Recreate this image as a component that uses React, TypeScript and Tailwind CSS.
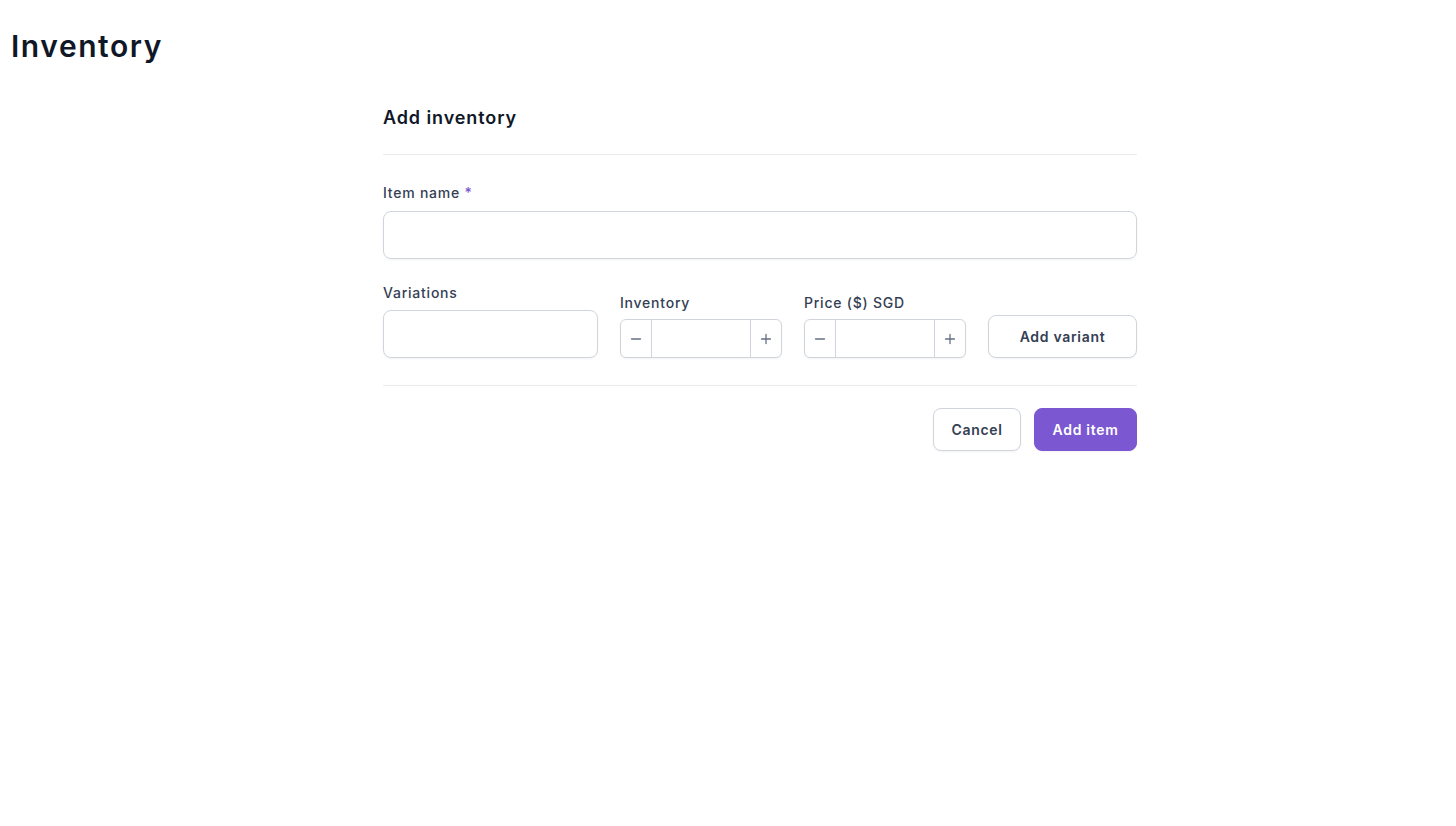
import React from "react";

function Stepper() {
  return (
    <div className="flex h-[39px] w-[162px] overflow-hidden rounded-md border border-[#d0d5dd] bg-white shadow-[0_1px_2px_rgba(16,24,40,0.05)]">
      <button className="flex w-[31px] shrink-0 items-center justify-center border-r border-[#d0d5dd] text-[#667085]">
        <svg width="12" height="12" viewBox="0 0 12 12" fill="none" stroke="currentColor" strokeWidth="1.3" strokeLinecap="round">
          <path d="M1.5 6h9" />
        </svg>
      </button>
      <input className="min-w-0 flex-1 px-2 text-sm outline-none" />
      <button className="flex w-[31px] shrink-0 items-center justify-center border-l border-[#d0d5dd] text-[#667085]">
        <svg width="12" height="12" viewBox="0 0 12 12" fill="none" stroke="currentColor" strokeWidth="1.3" strokeLinecap="round">
          <path d="M1.5 6h9M6 1.5v9" />
        </svg>
      </button>
    </div>
  );
}

export default function App() {
  return (
    <div className="min-h-[826px] bg-white font-['Inter',sans-serif] text-[#101828]">
      <h1 className="px-[11px] pt-[28px] text-[30px] font-semibold leading-9 tracking-[0.052em]">Inventory</h1>
      <div className="ml-[383px] w-[754px]">
        <div className="mt-[40px] border-b border-[#eaecf0] pb-[22px]">
          <h2 className="text-lg font-semibold leading-7 tracking-[0.05em]">Add inventory</h2>
        </div>
        <div className="pt-7">
          <label className="block text-sm font-medium leading-5 tracking-[0.055em] text-[#344054]">
            Item name <span className="text-[#7b57d1]">*</span>
          </label>
          <input className="mt-2 block h-12 w-full rounded-lg border border-[#d0d5dd] px-3 shadow-[0_1px_2px_rgba(16,24,40,0.05)] outline-none" />
        </div>
        <div className="mt-6 flex items-end gap-[22px] border-b border-[#eaecf0] pb-[27px]">
          <div className="w-[215px] shrink-0">
            <label className="block text-sm font-medium leading-5 tracking-[0.055em] text-[#344054]">Variations</label>
            <input className="mt-[7px] block h-12 w-full rounded-lg border border-[#d0d5dd] px-3 shadow-[0_1px_2px_rgba(16,24,40,0.05)] outline-none" />
          </div>
          <div className="shrink-0">
            <label className="block text-sm font-medium leading-5 tracking-[0.055em] text-[#344054]">Inventory</label>
            <div className="mt-[6px]">
              <Stepper />
            </div>
          </div>
          <div className="shrink-0">
            <label className="block text-sm font-medium leading-5 tracking-[0.055em] text-[#344054]">Price ($) SGD</label>
            <div className="mt-[6px]">
              <Stepper />
            </div>
          </div>
          <button className="h-[43px] w-[149px] shrink-0 rounded-lg border border-[#d0d5dd] bg-white text-sm font-semibold tracking-[0.05em] text-[#344054] shadow-[0_1px_2px_rgba(16,24,40,0.05)]">
            Add variant
          </button>
        </div>
        <div className="flex justify-end gap-[13px] pt-[22px]">
          <button className="h-[43px] w-[88px] rounded-lg border border-[#d0d5dd] bg-white text-sm font-semibold tracking-[0.05em] text-[#344054] shadow-[0_1px_2px_rgba(16,24,40,0.05)]">
            Cancel
          </button>
          <button className="h-[43px] w-[103px] rounded-lg border border-[#7b57d1] bg-[#7b57d1] text-sm font-semibold tracking-[0.05em] text-white shadow-[0_1px_2px_rgba(16,24,40,0.05)]">
            Add item
          </button>
        </div>
      </div>
    </div>
  );
}
